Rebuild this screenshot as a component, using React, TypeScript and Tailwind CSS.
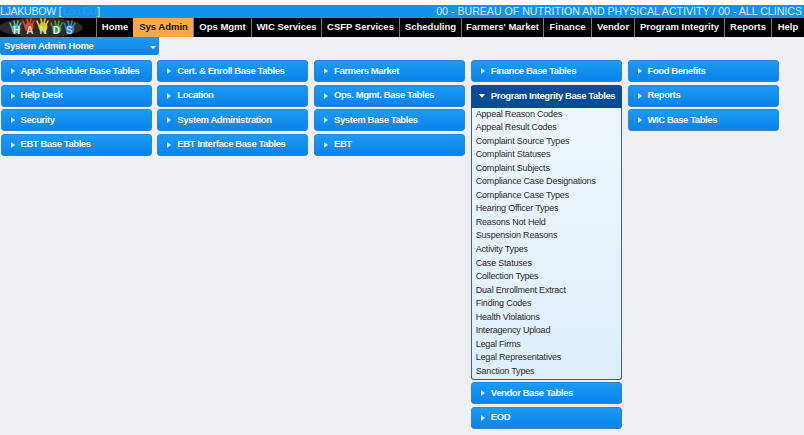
import React from 'react';

const navItems = [
  { label: 'Home', width: 'w-[37px]' },
  { label: 'Sys Admin', width: 'w-[60px]', active: true },
  { label: 'Ops Mgmt', width: 'w-[58px]' },
  { label: 'WIC Services', width: 'w-[70px]' },
  { label: 'CSFP Services', width: 'w-[78px]' },
  { label: 'Scheduling', width: 'w-[62px]' },
  { label: "Farmers' Market", width: 'w-[82px]' },
  { label: 'Finance', width: 'w-[48px]' },
  { label: 'Vendor', width: 'w-[43px]' },
  { label: 'Program Integrity', width: 'w-[90px]' },
  { label: 'Reports', width: 'w-[47px]' },
  { label: 'Help', width: 'w-[33px]' },
];

const columns = [
  ['Appt. Scheduler Base Tables', 'Help Desk', 'Security', 'EBT Base Tables'],
  ['Cert. & Enroll Base Tables', 'Location', 'System Administration', 'EBT Interface Base Tables'],
  ['Farmers Market', 'Ops. Mgmt. Base Tables', 'System Base Tables', 'EBT'],
];

const programItems = [
  'Appeal Reason Codes',
  'Appeal Result Codes',
  'Complaint Source Types',
  'Complaint Statuses',
  'Complaint Subjects',
  'Compliance Case Designations',
  'Compliance Case Types',
  'Hearing Officer Types',
  'Reasons Not Held',
  'Suspension Reasons',
  'Activity Types',
  'Case Statuses',
  'Collection Types',
  'Dual Enrollment Extract',
  'Finding Codes',
  'Health Violations',
  'Interagency Upload',
  'Legal Firms',
  'Legal Representatives',
  'Sanction Types',
];

const hands = [
  { x: 15, y: 3, c: '#4fb8a8' },
  { x: 28, y: 1, c: '#d8483c' },
  { x: 42, y: 1, c: '#d9c23c' },
  { x: 56, y: 3, c: '#4a9a4c' },
  { x: 69, y: 3, c: '#3a78b8' },
];

const Logo = () => (
  <div className="relative w-[96px] h-[19px] shrink-0 bg-black overflow-hidden">
    <svg width="96" height="19" viewBox="0 0 96 19" className="absolute left-0 top-0">
      <ellipse cx="41" cy="9.5" rx="42" ry="10" fill="#2e2a28" />
      {hands.map((h) => (
        <g key={h.x} stroke={h.c} strokeWidth="1.6" strokeLinecap="round" fill={h.c}>
          <circle cx={h.x + 1} cy={h.y + 8} r="4.5" stroke="none" />
          <path d={`M${h.x - 3} ${h.y + 7}L${h.x - 5} ${h.y + 2}M${h.x} ${h.y + 5}L${h.x - 1} ${h.y}M${h.x + 2} ${h.y + 5}L${h.x + 3} ${h.y}M${h.x + 4} ${h.y + 6}L${h.x + 6} ${h.y + 2}`} fill="none" />
        </g>
      ))}
    </svg>
    <div className="absolute left-[13px] top-[7px] flex gap-[6px] font-['Liberation_Sans',sans-serif] font-bold text-[10px] leading-[12px] text-[#dfeee6]">
      <span>H</span>
      <span className="text-[#f0c8c0]">A</span>
      <span className="text-[#e8e070]">N</span>
      <span>D</span>
      <span className="text-[#a8cfee]">S</span>
    </div>
  </div>
);

const Arrow = ({ open }: { open?: boolean }) =>
  open ? (
    <span className="w-0 h-0 border-x-[3px] border-x-transparent border-t-[4px] border-t-white" />
  ) : (
    <span className="w-0 h-0 border-y-[3px] border-y-transparent border-l-[4px] border-l-[#d4ecff]" />
  );

const PanelButton = ({ label }: { label: string }) => (
  <div className="h-[22px] flex items-center gap-[6px] pl-[9px] rounded-[3px] border border-[#2f86cf] bg-gradient-to-b from-[#1c9bf5] to-[#0a83ea] text-[#f2f9ff] text-[9.5px] tracking-[-0.42px] font-bold whitespace-nowrap">
    <Arrow />
    <span>{label}</span>
  </div>
);

const App = () => {
  return (
    <div className="w-[804px] h-[435px] overflow-hidden bg-[#eef0f4] font-['Liberation_Sans',Arial,sans-serif]">
      <div className="h-[5px] bg-white" />
      {/* Header */}
      <div className="h-[13px] flex justify-between items-center bg-[#0f95ee] text-[#d9efff] text-[10.6px] leading-[13px] whitespace-nowrap">
        <div className="flex">
          <span className="tracking-[-0.3px]">LJAKUBOW [</span>
          <span className="w-[36px] pl-[2px] tracking-[-0.3px] text-[#2d9de8]">Log Out</span>
          <span>]</span>
        </div>
        <div className="pr-[2px]">00 - BUREAU OF NUTRITION AND PHYSICAL ACTIVITY / 00 - ALL CLINICS</div>
      </div>
      {/* Nav */}
      <div className="h-[19px] flex bg-black">
        <Logo />
        {navItems.map((item) => (
          <div
            key={item.label}
            className={`${item.width} shrink-0 flex items-center justify-center border-l whitespace-nowrap text-[9.5px] font-bold ${
              item.active ? 'bg-[#f7a94a] text-[#1a1208] border-[#f7a94a]' : 'text-[#f2f2f2] border-[#777]'
            }`}
          >
            {item.label}
          </div>
        ))}
      </div>
      {/* Home dropdown */}
      <div className="w-[159px] h-[18px] flex items-center justify-between pl-[4px] pr-[3px] rounded-b-[3px] bg-gradient-to-b from-[#1c9bf5] to-[#0a83ea] text-[#f2f9ff] text-[9.5px] tracking-[-0.3px] font-bold">
        <span>System Admin Home</span>
        <span className="w-0 h-0 mt-[3px] border-x-[3px] border-x-transparent border-t-[3px] border-t-white" />
      </div>
      {/* Menu grid */}
      <div className="flex gap-[5.75px] pl-[0.5px] pt-[5px]">
        {columns.map((col) => (
          <div key={col[0]} className="w-[151px] flex flex-col gap-[2.5px]">
            {col.map((label) => (
              <PanelButton key={label} label={label} />
            ))}
          </div>
        ))}
        <div className="w-[151px] flex flex-col gap-[2.5px]">
          <PanelButton label="Finance Base Tables" />
          <div className="flex flex-col">
            <div className="h-[23px] flex items-center gap-[6px] pl-[8px] rounded-t-[3px] bg-[#0b4a94] text-[#f2f9ff] text-[9.5px] tracking-[-0.42px] font-bold whitespace-nowrap">
              <Arrow open />
              <span>Program Integrity Base Tables</span>
            </div>
            <div className="h-[272px] pl-[4px] border border-t-0 border-[#3d5f86] rounded-b-[3px] bg-gradient-to-b from-[#eef6fc] to-[#dfeefa] text-[#2b2b2b] text-[9px] tracking-[-0.2px]">
              {programItems.map((item) => (
                <div key={item} className="h-[13.55px] leading-[13.55px] whitespace-nowrap">
                  {item}
                </div>
              ))}
            </div>
          </div>
          <PanelButton label="Vendor Base Tables" />
          <PanelButton label="EOD" />
        </div>
        <div className="w-[151px] flex flex-col gap-[2.5px]">
          <PanelButton label="Food Benefits" />
          <PanelButton label="Reports" />
          <PanelButton label="WIC Base Tables" />
        </div>
      </div>
    </div>
  );
};

export default App;
